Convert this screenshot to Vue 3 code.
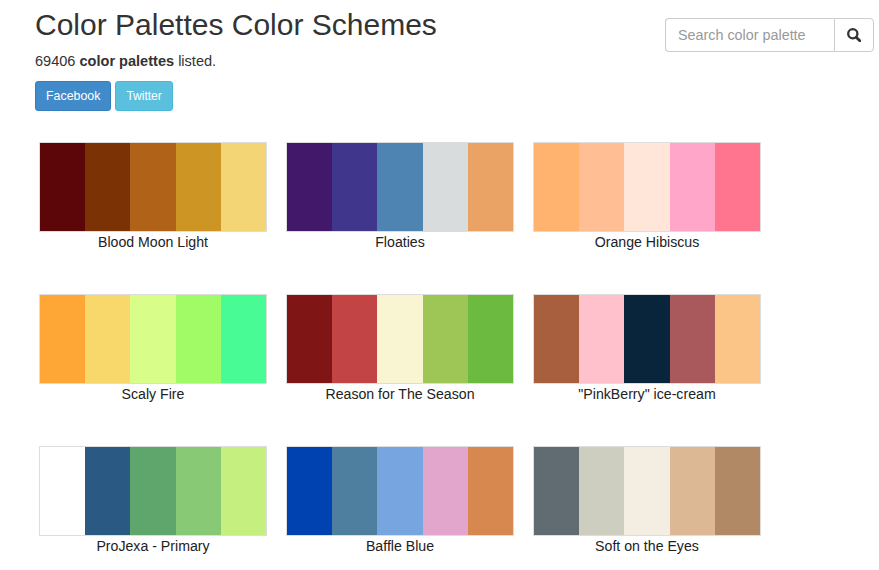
<script setup>
const palettes = [
  { name: 'Blood Moon Light', colors: ['#5c0609', '#7b3306', '#b06219', '#cd9524', '#f3d576'] },
  { name: 'Floaties', colors: ['#42196a', '#40368b', '#4d84b2', '#d8dcdd', '#eba365'] },
  { name: 'Orange Hibiscus', colors: ['#ffb36e', '#ffbe94', '#ffe6d8', '#ffa6c9', '#ff758f'] },
  { name: 'Scaly Fire', colors: ['#ffa736', '#f8d86a', '#d8fd88', '#a0fb67', '#48fb95'] },
  { name: 'Reason for The Season', colors: ['#801515', '#c24445', '#f9f5d2', '#9dc656', '#6cba3f'] },
  { name: '"PinkBerry" ice-cream', colors: ['#a85f3d', '#ffc2cc', '#08253b', '#a9585b', '#fbc587'] },
  { name: 'ProJexa - Primary', colors: ['#ffffff', '#2a5a84', '#5fa66d', '#87c975', '#c5f07f'] },
  { name: 'Baffle Blue', colors: ['#0043b0', '#4f7f9f', '#76a5e0', '#e2a6cd', '#d7884e'] },
  { name: 'Soft on the Eyes', colors: ['#616c72', '#cdcdc0', '#f4ede2', '#dcb994', '#b18965'] }
]
</script>

<template>
  <div class="page">
    <header class="top">
      <div class="intro">
        <h1>Color Palettes Color Schemes</h1>
        <p class="count">69406 <b>color palettes</b> listed.</p>
        <div class="buttons">
          <a class="btn fb">Facebook</a>
          <a class="btn tw">Twitter</a>
        </div>
      </div>
      <form class="search" @submit.prevent>
        <input type="text" placeholder="Search color palette" />
        <button type="button" aria-label="Search">
          <svg width="14" height="14" viewBox="0 0 14 14" fill="none" stroke="#333" stroke-width="2.3">
            <circle cx="5.8" cy="5.8" r="4.6" />
            <path d="M9.2 9.2 L12.8 12.8" stroke-linecap="round" stroke-width="2.8" />
          </svg>
        </button>
      </form>
    </header>
    <section class="grid">
      <figure v-for="p in palettes" :key="p.name" class="card">
        <div class="swatches">
          <span v-for="(c, i) in p.colors" :key="i" class="swatch" :style="{ background: c }"></span>
        </div>
        <figcaption>{{ p.name }}</figcaption>
      </figure>
    </section>
  </div>
</template>

<style>
html, body { margin: 0; background: #fff; }
</style>

<style scoped>
.page {
  width: 879px;
  height: 570px;
  overflow: hidden;
  box-sizing: border-box;
  padding-left: 35px;
  font-family: "Liberation Sans", Arial, sans-serif;
  font-size: 14px;
  line-height: 20px;
  color: #333;
}
.top {
  display: flex;
  justify-content: space-between;
  align-items: flex-start;
  padding-right: 5px;
}
h1 {
  margin: 8px 0 0;
  font-size: 30px;
  line-height: 33px;
  font-weight: 400;
}
.count {
  margin: 10px 0 0;
  font-size: 14.56px;
}
.buttons {
  display: flex;
  gap: 4px;
  margin-top: 10px;
}
.btn {
  box-sizing: border-box;
  height: 30px;
  padding: 4px 10px;
  border: 1px solid;
  border-radius: 3px;
  font-size: 12.4px;
  line-height: 20px;
  color: #fff;
}
.fb { background: #428bca; border-color: #357ebd; }
.tw { background: #5bc0de; border-color: #46b8da; font-size: 12px; }
.search {
  display: flex;
  height: 34px;
  margin-top: 18px;
}
.search input {
  box-sizing: border-box;
  width: 169px;
  height: 34px;
  padding: 6px 12px;
  border: 1px solid #ccc;
  border-right: 0;
  border-radius: 4px 0 0 4px;
  outline: 0;
  font: inherit;
  font-size: 14.35px;
  color: #555;
}
.search input::placeholder { color: #999; opacity: 1; }
.search button {
  box-sizing: border-box;
  width: 40px;
  height: 34px;
  padding: 0;
  display: flex;
  align-items: center;
  justify-content: center;
  background: #fff;
  border: 1px solid #ccc;
  border-radius: 0 4px 4px 0;
}
.grid {
  display: grid;
  grid-template-columns: repeat(3, 228px);
  column-gap: 19px;
  row-gap: 62px;
  margin: 31px 0 0 4px;
}
.card {
  margin: 0;
  height: 90px;
}
.swatches {
  display: flex;
  box-sizing: border-box;
  width: 228px;
  height: 90px;
  border: 1px solid #ddd;
}
.swatch { flex: 1; }
figcaption {
  text-align: center;
  font-size: 14.15px;
  color: #222;
  margin-top: 0;
}
</style>
